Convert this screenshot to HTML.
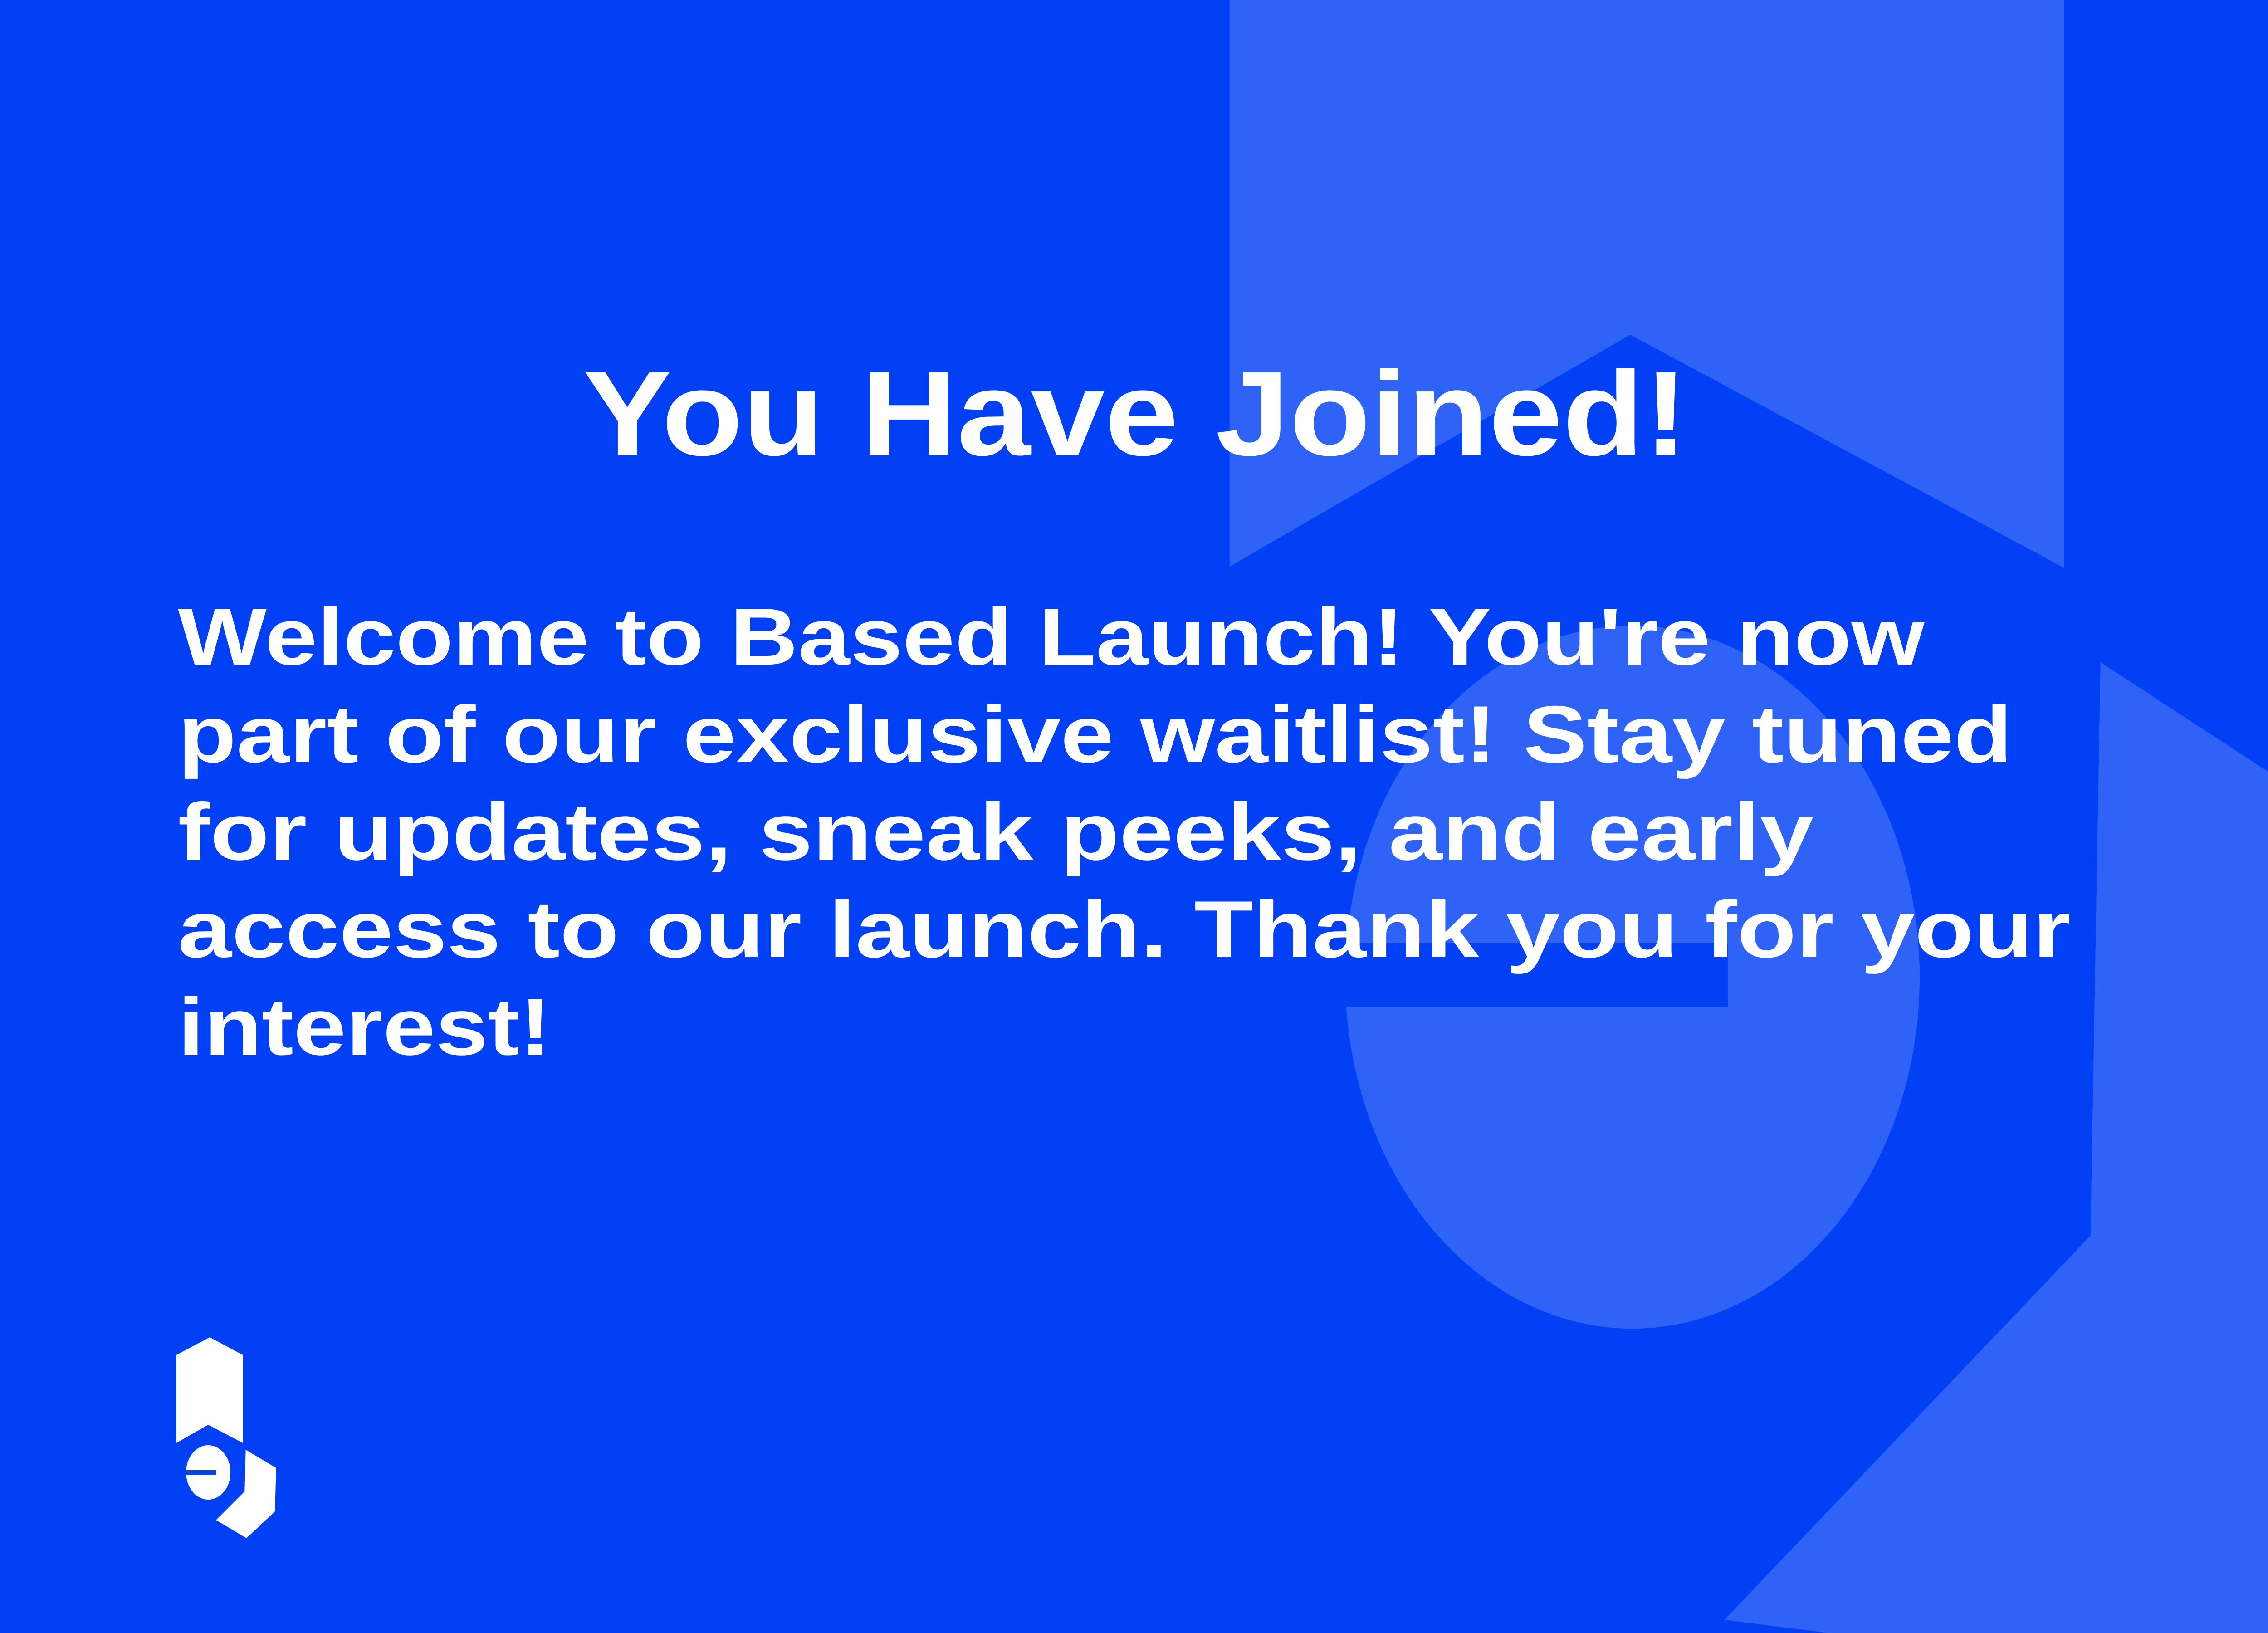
<!DOCTYPE html>
<html><head><meta charset="utf-8"><style>
html,body{margin:0;padding:0;background:#0140f4;width:100%;height:100%;overflow:hidden;}
svg{display:block;position:fixed;left:0;top:0;width:100vw;height:100vh}
text{font-family:"Liberation Sans",sans-serif;font-weight:bold;fill:#fff}
</style></head><body>
<svg viewBox="0 0 6120 3600" preserveAspectRatio="none" xmlns="http://www.w3.org/2000/svg">
<rect width="6120" height="3600" fill="#0140f4"/>
<g fill="#2f63f7">
<polygon points="3318,0 5570,0 5570,1252 4399,738 3318,1249"/>
<circle cx="4405" cy="2154" r="775"/>
<polygon points="5668,1460 6120,1701 6120,3600 4934,3600 4653,3571 5641,2724"/>
</g>
<rect x="3550" y="2079" width="1112" height="142" fill="#0140f4"/>
<text x="1573" y="1003" font-size="265" textLength="2982" lengthAdjust="spacingAndGlyphs">You Have Joined!</text>
<g font-size="178">
<text x="480" y="1465" textLength="4713" lengthAdjust="spacingAndGlyphs">Welcome to Based Launch! You're now</text>
<text x="480" y="1680" textLength="4950" lengthAdjust="spacingAndGlyphs">part of our exclusive waitlist! Stay tuned</text>
<text x="480" y="1895" textLength="4414" lengthAdjust="spacingAndGlyphs">for updates, sneak peeks, and early</text>
<text x="480" y="2110" textLength="5107" lengthAdjust="spacingAndGlyphs">access to our launch. Thank you for your</text>
<text x="480" y="2325" textLength="1007" lengthAdjust="spacingAndGlyphs">interest!</text>
</g>
<g fill="#fff">
<polygon points="476,2987 566,2948 655,2987 655,3181 562,3141 476,3181"/>
<circle cx="562" cy="3246" r="60"/>
<polygon points="663,3196 745,3236 742,3332 665,3391 583,3351 660,3288"/>
</g>
<rect x="495" y="3241" width="88" height="10" fill="#0140f4"/>
</svg>
</body></html>
